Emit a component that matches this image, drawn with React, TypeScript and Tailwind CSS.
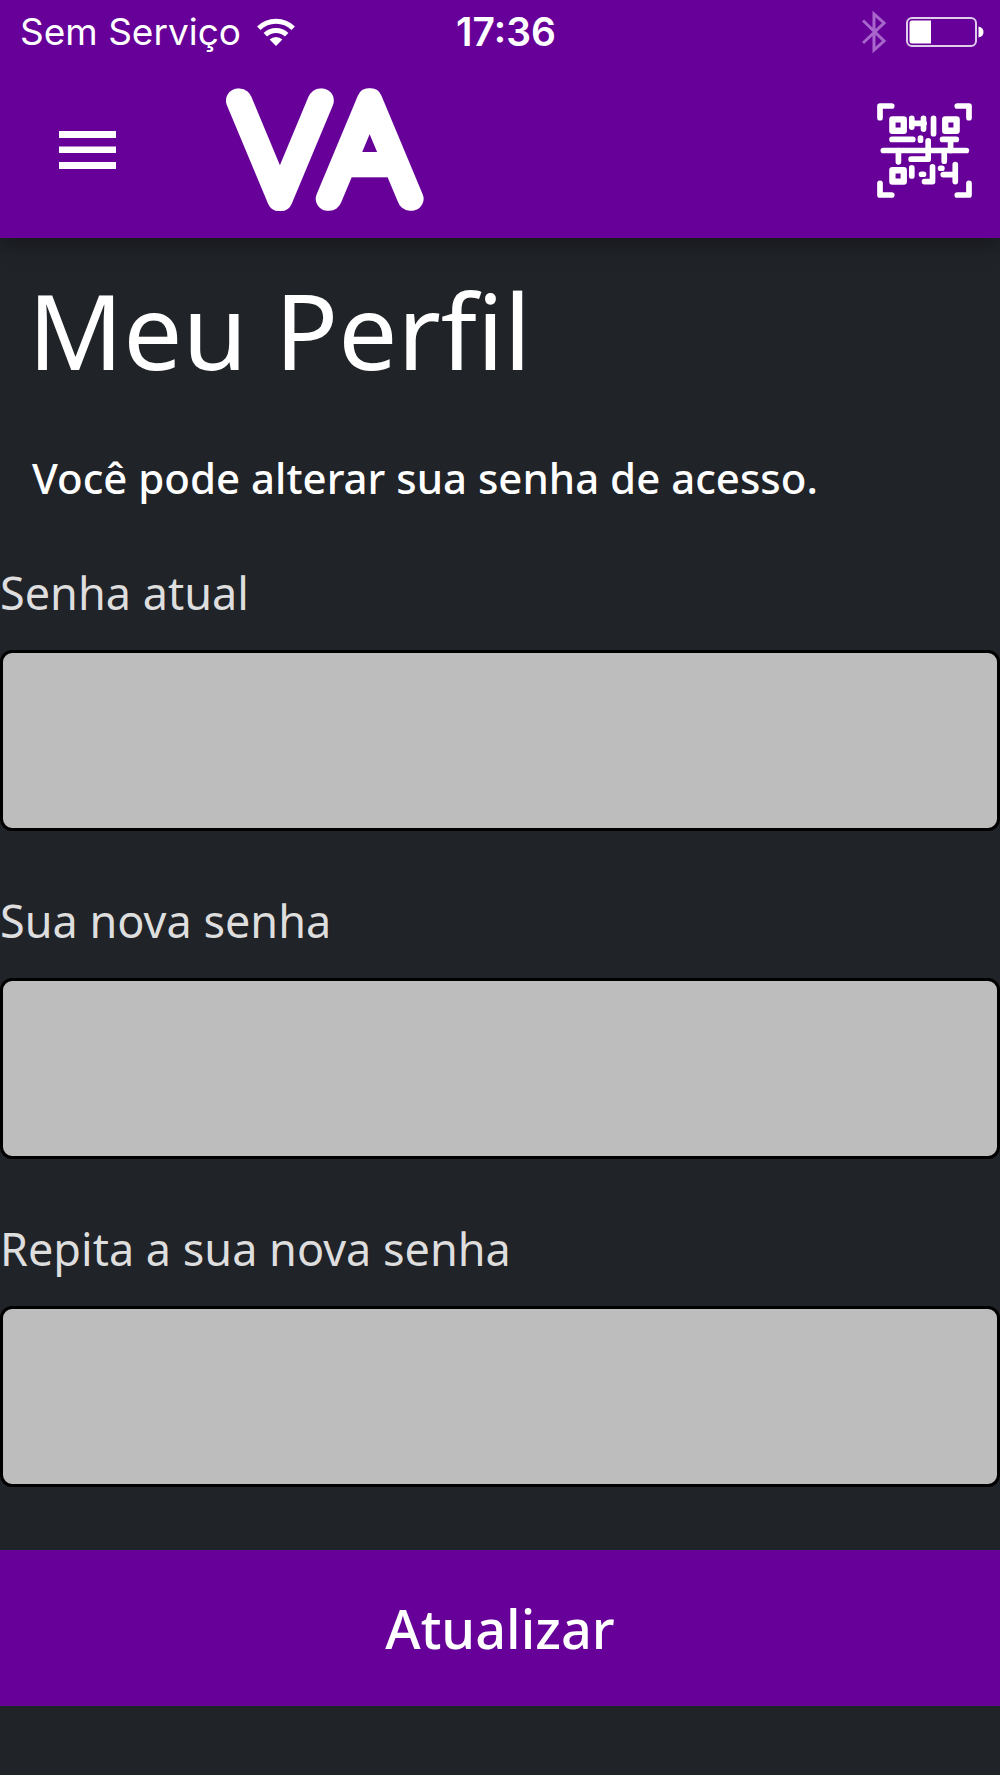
import { useState } from 'react';

const fields = [
  { id: 'current-password', label: 'Senha atual' },
  { id: 'new-password', label: 'Sua nova senha' },
  { id: 'repeat-password', label: 'Repita a sua nova senha' },
];

function WifiIcon() {
  return (
    <svg viewBox="0 0 38 28" className="w-[38px] h-7" aria-hidden="true">
      <g fill="none" stroke="#fff" strokeWidth="5">
        <path d="M1.8 10.2 A 24.6 24.6 0 0 1 36.2 10.2" />
        <path d="M8.3 16.8 A 15.4 15.4 0 0 1 29.7 16.8" />
      </g>
      <path d="M19 28 L12.6 21.6 A 9 9 0 0 1 25.4 21.6 Z" fill="#fff" />
    </svg>
  );
}

function BluetoothIcon() {
  return (
    <svg viewBox="0 0 24 42" className="w-6 h-[42px]" aria-hidden="true">
      <path
        d="M1 9.5 L22 30 L12 39 V3 L22 12 L1 32"
        fill="none"
        stroke="#a866cc"
        strokeWidth="3"
      />
    </svg>
  );
}

function BatteryIcon() {
  return (
    <svg viewBox="0 0 78 30" className="w-[78px] h-[30px]" aria-hidden="true">
      <rect x="1" y="1" width="69" height="28" rx="5" fill="none" stroke="#e0cceb" strokeWidth="2" />
      <path d="M6 3.5 H25 V26.5 H6 Q3.5 26.5 3.5 24 V6 Q3.5 3.5 6 3.5 Z" fill="#fff" />
      <path d="M72.5 9.5 Q77.5 10.5 77.5 15 Q77.5 19.5 72.5 20.5 Z" fill="#fff" />
    </svg>
  );
}

function MenuIcon() {
  return (
    <svg viewBox="0 0 57 38" className="w-[57px] h-[38px]" aria-hidden="true">
      <path d="M0 0 H57 V7 H0 Z M0 15.5 H57 V22 H0 Z M0 31 H57 V38 H0 Z" fill="#fff" />
    </svg>
  );
}

function Logo() {
  return (
    <svg viewBox="0 0 220 188" className="w-[220px] h-[188px] -my-2" role="img" aria-label="VA">
      <text
        x="13"
        y="143"
        fontSize="141"
        fill="#fff"
        stroke="#fff"
        strokeWidth="24"
        strokeLinejoin="round"
        className="font-['Lato',sans-serif] font-thin [font-kerning:none]"
      >
        VA
      </text>
    </svg>
  );
}

function QrCodeIcon() {
  return (
    <svg viewBox="0 0 284 284" className="w-[95px] h-[95px]" aria-hidden="true">
      <g fill="none" stroke="#fff" strokeWidth="17" strokeLinecap="round" strokeLinejoin="round">
        {/* Corner brackets */}
        <path d="M9 44 V9 H44 M240 9 H275 V44 M9 240 V275 H44 M240 275 H275 V240" />
        {/* Finder squares */}
        <path strokeWidth="19" d="M46 49 H80 V83 H46 Z M204 49 H238 V83 H204 Z M46 201 H80 V235 H46 Z" />
        {/* Scan line */}
        <path d="M19 142 H267" />
        <path d="M104 46 V72 M104 61 H141 M139 46 V78 M169 46 V92" />
        <path d="M45 109 H107 M130 105 V111 M153 113 V168 H102 M196 109 H237 M220 109 V142" />
        <path d="M64 142 V176 M201 142 V174" />
        <path d="M104 194 V218 M133 213 H139 M166 191 V235 H142 M190 195 H194 M234 184 V235 M198 214 H234" />
      </g>
    </svg>
  );
}

function StatusBar() {
  return (
    <div className="grid grid-cols-3 items-center h-16 pl-5 pr-4 font-['Inter',sans-serif]">
      <div className="flex items-center gap-4 whitespace-nowrap text-[37px]">
        <span>Sem Serviço</span>
        <WifiIcon />
      </div>
      <span className="justify-self-center pl-2 text-[39px] font-semibold">17:36</span>
      <div className="flex items-center justify-end gap-5">
        <BluetoothIcon />
        <BatteryIcon />
      </div>
    </div>
  );
}

export default function App() {
  const [values, setValues] = useState<Record<string, string>>({});

  return (
    <div className="bg-white min-h-screen pb-[3px] flex flex-col font-['Noto_Sans',sans-serif] text-white">
      <header className="relative bg-[#660099] shadow-[0_4px_20px_rgba(0,0,0,0.4)]">
        <StatusBar />
        <div className="flex items-center pl-[59px] pr-7 pb-0.5">
          <button type="button" aria-label="Menu">
            <MenuIcon />
          </button>
          <div className="ml-[106px]">
            <Logo />
          </div>
          <button type="button" aria-label="Ler QR code" className="ml-auto">
            <QrCodeIcon />
          </button>
        </div>
      </header>

      <main className="grow bg-[#202328]">
        <h1 className="px-7 pt-6 text-[105px] leading-[136px]">Meu Perfil</h1>
        <p className="px-8 pt-12 text-[42px] leading-[64px] font-medium">
          Você pode alterar sua senha de acesso.
        </p>

        <form className="pt-[54px]" onSubmit={(e) => e.preventDefault()}>
          {fields.map((field) => (
            <div key={field.id} className="mb-[61px]">
              <label htmlFor={field.id} className="block mb-7 text-[45px] leading-[58px] text-[#dedede]">
                {field.label}
              </label>
              <input
                id={field.id}
                type="password"
                value={values[field.id] ?? ''}
                onChange={(e) => setValues({ ...values, [field.id]: e.target.value })}
                className="block w-full h-[181px] px-8 rounded-xl border-3 border-black bg-[#bdbdbd] text-[45px] text-black"
              />
            </div>
          ))}
          <button type="submit" className="block w-full h-[156px] mt-[63px] bg-[#660099] text-[54px] font-medium">
            Atualizar
          </button>
        </form>
      </main>
    </div>
  );
}
